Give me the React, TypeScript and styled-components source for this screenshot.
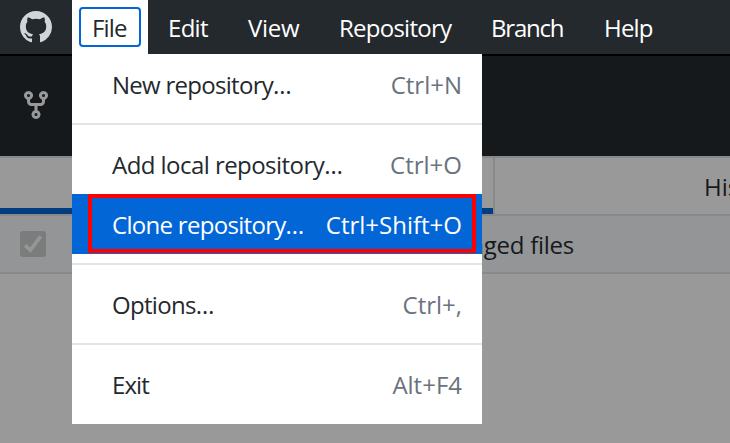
import React from "react";
import styled, { createGlobalStyle } from "styled-components";

const GlobalStyle = createGlobalStyle`
  *, *::before, *::after { box-sizing: border-box; }
  html, body { margin: 0; padding: 0; overflow: hidden; background: #999999; }
`;

const Window = styled.div`
  position: relative;
  display: flex;
  flex-direction: column;
  width: 730px;
  height: 443px;
  overflow: hidden;
  background: #999999;
  color: #16191c;
  font: 400 24px/30px "Open Sans", "Noto Sans", sans-serif;
  white-space: pre;
`;

const TitleBar = styled.header`
  display: flex;
  flex: none;
  height: 54px;
  background: #24292e;
`;

const LogoSlot = styled.div`
  display: flex;
  width: 72px;
  padding: 11px 0 0 20px;
  color: #d1d5da;
`;

const MenuTab = styled.div<{ $width: number; $open?: boolean }>`
  display: flex;
  flex: none;
  width: ${(p) => p.$width}px;
  padding: ${(p) => (p.$open ? "7px" : "7px 0 7px 20px")};
  background: ${(p) => (p.$open ? "#ffffff" : "transparent")};
  color: ${(p) => (p.$open ? "#24292e" : "#ffffff")};
`;

const FocusRing = styled.div`
  display: flex;
  width: 62px;
  height: 40px;
  padding-left: 11px;
  border: 2px solid #0366d6;
  border-radius: 4px;
`;

const Label = styled.span<{ $tracking: number; $top?: number }>`
  margin-top: ${(p) => p.$top ?? 0}px;
  letter-spacing: ${(p) => p.$tracking}px;
`;

const Toolbar = styled.div`
  flex: none;
  height: 102px;
  padding: 33px 0 0 20px;
  border-top: 2px solid #000000;
  background: #16191c;
  color: #999999;
`;

const Tabs = styled.div`
  display: flex;
  flex: none;
  height: 60px;
  border-top: 2px solid #87898b;
  border-bottom: 2px solid #87898b;
`;

const Tab = styled.div<{ $active?: boolean }>`
  flex: none;
  width: 495px;
  padding: 14px 0 0 ${(p) => (p.$active ? 0 : 209)}px;
  border-right: 2px solid #87898b;
  background: ${(p) =>
    p.$active ? "linear-gradient(#023d80, #023d80) bottom / 100% 6px no-repeat content-box" : "none"};
`;

const FilesRow = styled.div`
  display: flex;
  flex: none;
  height: 58px;
  padding: 15px 0 0 20px;
  border-bottom: 2px solid #87898b;
  background: #949596;
`;

const FilesLabel = styled.div`
  width: 528px;
  margin-top: -1px;
  text-align: right;
`;

const Menu = styled.nav`
  position: absolute;
  top: 54px;
  left: 72px;
  width: 410px;
  height: 370px;
  background: #ffffff;
`;

const MenuItem = styled.div<{ $selected?: boolean }>`
  display: flex;
  justify-content: space-between;
  height: 60px;
  padding: 16px 20px 0 40px;
  background: ${(p) => (p.$selected ? "#0366d6" : "transparent")};
  color: ${(p) => (p.$selected ? "#ffffff" : "#24292e")};
`;

const Shortcut = styled(Label)<{ $selected?: boolean }>`
  color: ${(p) => (p.$selected ? "#ffffff" : "#6a737d")};
`;

const Divider = styled.div`
  height: 2px;
  margin: 9px 0;
  background: #e1e4e8;
`;

const Highlight = styled.div`
  position: absolute;
  top: 194px;
  left: 88px;
  width: 388px;
  height: 59px;
  border: 4px solid #ff0000;
`;

const tabs = [
  { text: "Edit", width: 80, tracking: -0.7 },
  { text: "View", width: 91, tracking: -0.3 },
  { text: "Repository", width: 152, tracking: -0.75 },
  { text: "Branch", width: 113, tracking: -1.2 },
  { text: "Help", width: 89, tracking: -0.8 },
];

const items = [
  { text: "New repository…", tracking: -0.72, keys: "Ctrl+N", divided: true },
  { text: "Add local repository…", tracking: -0.55, keys: "Ctrl+O" },
  { text: "Clone repository…", tracking: -0.7, keys: "Ctrl+Shift+O", selected: true, divided: true },
  { text: "Options…", tracking: -0.7, keys: "Ctrl+,", divided: true },
  { text: "Exit", tracking: -0.9, keys: "Alt+F4" },
];

const GitHubMark = () => (
  <svg width="32" height="32" viewBox="0 0 16 16" fill="currentColor">
    <path fillRule="evenodd" d="M8 0C3.58 0 0 3.58 0 8c0 3.54 2.29 6.53 5.47 7.59.4.07.55-.17.55-.38 0-.19-.01-.82-.01-1.49-2.01.37-2.53-.49-2.69-.94-.09-.23-.48-.94-.82-1.13-.28-.15-.68-.52-.01-.53.63-.01 1.08.58 1.23.82.72 1.21 1.87.87 2.33.66.07-.52.28-.87.51-1.07-1.78-.2-3.64-.89-3.64-3.95 0-.87.31-1.59.82-2.15-.08-.2-.36-1.02.08-2.12 0 0 .67-.21 2.2.82.64-.18 1.32-.27 2-.27s1.36.09 2 .27c1.53-1.04 2.2-.82 2.2-.82.44 1.1.16 1.92.08 2.12.51.56.82 1.27.82 2.15 0 3.07-1.87 3.75-3.65 3.95.29.25.54.73.54 1.48 0 1.07-.01 1.93-.01 2.2 0 .21.15.46.55.38A8.01 8.01 0 0 0 16 8c0-4.42-3.58-8-8-8z" />
  </svg>
);

const ForkIcon = () => (
  <svg width="32" height="32" viewBox="0 0 16 16" fill="currentColor">
    <path fillRule="evenodd" d="M5 3.25a.75.75 0 11-1.5 0 .75.75 0 011.5 0zm0 2.122a2.25 2.25 0 10-1.5 0v.878A2.25 2.25 0 005.75 8.5h1.5v2.128a2.251 2.251 0 101.5 0V8.5h1.5a2.25 2.25 0 002.25-2.25v-.878a2.25 2.25 0 10-1.5 0v.878a.75.75 0 01-.75.75h-4.5A.75.75 0 015 6.25v-.878zm3.75 7.378a.75.75 0 11-1.5 0 .75.75 0 011.5 0zm3-8.75a.75.75 0 100-1.5.75.75 0 000 1.5z" />
  </svg>
);

const CheckedBox = () => (
  <svg width="26" height="26" viewBox="0 0 26 26" fill="none">
    <rect width="26" height="26" rx="3" fill="#7b7d7c" />
    <path d="M5 14.3L10.3 19L20.8 5.3" stroke="#959796" strokeWidth="3.6" />
  </svg>
);

export default function App() {
  return (
    <Window>
      <GlobalStyle />
      <TitleBar>
        <LogoSlot><GitHubMark /></LogoSlot>
        <MenuTab $width={76} $open>
          <FocusRing><Label $tracking={-0.8} $top={4}>File</Label></FocusRing>
        </MenuTab>
        {tabs.map((t) => (
          <MenuTab key={t.text} $width={t.width}>
            <Label $tracking={t.tracking} $top={6}>{t.text}</Label>
          </MenuTab>
        ))}
      </TitleBar>
      <Toolbar><ForkIcon /></Toolbar>
      <Tabs>
        <Tab $active />
        <Tab><Label $tracking={0}>History</Label></Tab>
      </Tabs>
      <FilesRow>
        <CheckedBox />
        <FilesLabel><Label $tracking={-0.25}>0 changed files</Label></FilesLabel>
      </FilesRow>
      <Menu>
        {items.map((item) => (
          <React.Fragment key={item.text}>
            <MenuItem $selected={item.selected}>
              <Label $tracking={item.tracking}>{item.text}</Label>
              <Shortcut $tracking={0} $selected={item.selected}>{item.keys}</Shortcut>
            </MenuItem>
            {item.divided && <Divider />}
          </React.Fragment>
        ))}
      </Menu>
      <Highlight />
    </Window>
  );
}
